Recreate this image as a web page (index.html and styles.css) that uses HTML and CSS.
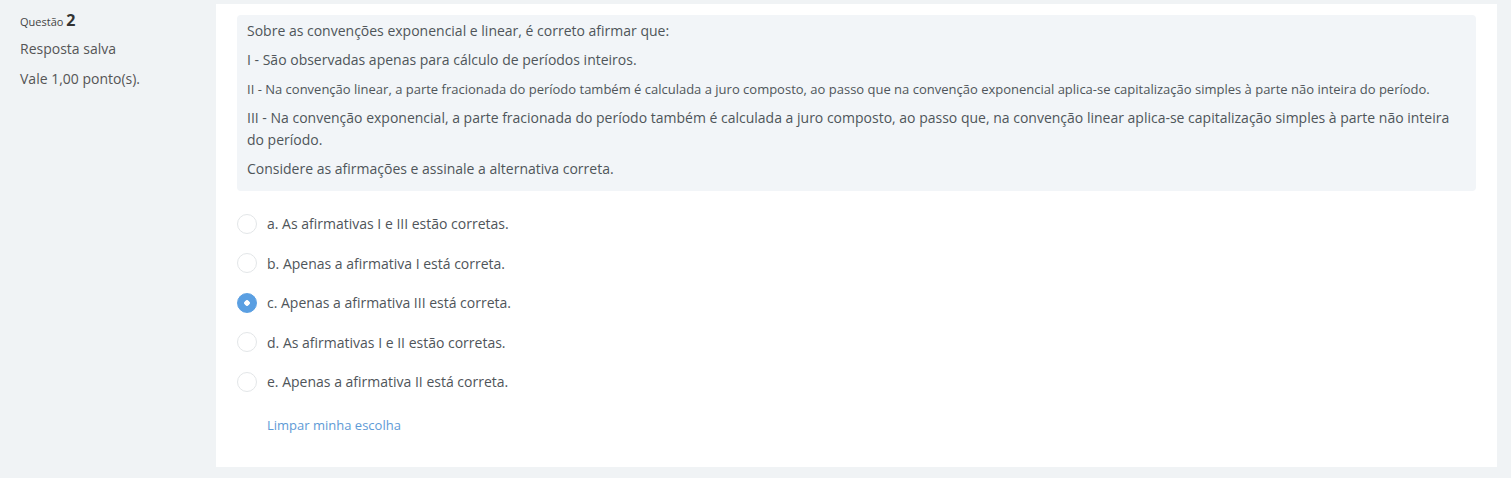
FILE: index.html
```html
<!DOCTYPE html>
<html lang="pt">
<head>
<meta charset="utf-8">
<link rel="stylesheet" href="styles.css">
</head>
<body>
<div class="que">
  <div class="info">
    <h3 class="no">Questão <span class="qno">2</span></h3>
    <div class="state">Resposta salva</div>
    <div class="grade">Vale 1,00 ponto(s).</div>
  </div>
  <div class="content">
    <div class="qtext">
      <p>Sobre as convenções exponencial e linear, é correto afirmar que:</p>
      <p>I - São observadas apenas para cálculo de períodos inteiros.</p>
      <p class="small">II - Na convenção linear, a parte fracionada do período também é calculada a juro composto, ao passo que na convenção exponencial aplica-se capitalização simples à parte não inteira do período.</p>
      <p>III - Na convenção exponencial, a parte fracionada do período também é calculada a juro composto, ao passo que, na convenção linear aplica-se capitalização simples à parte não inteira do período.</p>
      <p>Considere as afirmações e assinale a alternativa correta.</p>
    </div>
    <div class="answers">
      <label class="opt"><span class="radio"></span><span>a. As afirmativas I e III estão corretas.</span></label>
      <label class="opt"><span class="radio"></span><span>b. Apenas a afirmativa I está correta.</span></label>
      <label class="opt"><span class="radio checked"></span><span>c. Apenas a afirmativa III está correta.</span></label>
      <label class="opt"><span class="radio"></span><span>d. As afirmativas I e II estão corretas.</span></label>
      <label class="opt"><span class="radio"></span><span>e. Apenas a afirmativa II está correta.</span></label>
    </div>
    <a class="clear" href="#">Limpar minha escolha</a>
  </div>
</div>
</body>
</html>
```
FILE: styles.css
```css
html, body {
  margin: 0;
  padding: 0;
  background: #f0f3f5;
  font-family: "Open Sans", "Liberation Sans", sans-serif;
  color: #4f555a;
  font-size: 14px;
}
.que {
  display: flex;
  padding: 4px 14px 12px 20px;
}
.info {
  width: 196px;
  flex: none;
  color: #555;
}
.no {
  margin: 5px 0 0;
  font-size: 11px;
  font-weight: normal;
  line-height: 22px;
  color: #444;
}
.qno {
  font-size: 16px;
  font-weight: bold;
  color: #333;
}
.state {
  margin-top: 5px;
  line-height: 22px;
}
.grade {
  margin-top: 8px;
  line-height: 22px;
}
.content {
  flex: 1;
  background: #fff;
  padding: 11px 21px 33px 21px;
}
.qtext {
  background: #f2f5f8;
  border-radius: 4px;
  padding: 5px 10px 4px;
}
.qtext p {
  margin: 0 0 7px;
  line-height: 22px;
}
.qtext p.small {
  font-size: 13px;
}
.answers {
  display: flex;
  flex-direction: column;
  margin-top: 13px;
}
.opt {
  display: flex;
  align-items: center;
  height: 39.5px;
  gap: 10px;
}
.radio {
  width: 18px;
  height: 18px;
  border: 1px solid #e3e6e8;
  border-radius: 50%;
  background: #fff;
  box-sizing: content-box;
  flex: none;
}
.radio.checked {
  background: radial-gradient(circle, #fff 0 2.5px, #5a9fe2 3px);
  border-color: #5a9fe2;
}
.clear {
  display: inline-block;
  margin: 14px 0 0 30px;
  color: #5e9ad6;
  font-size: 13px;
  text-decoration: none;
}
```
